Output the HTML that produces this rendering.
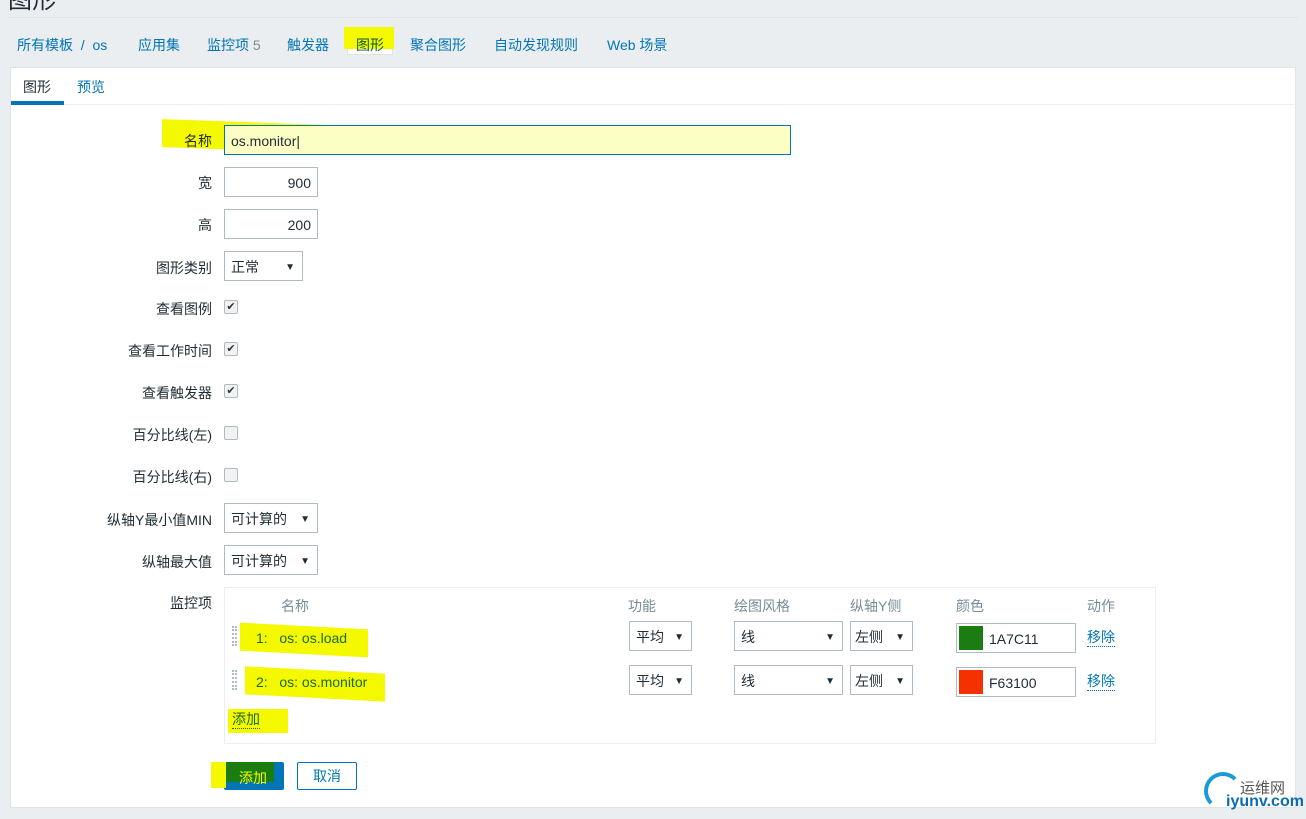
<!DOCTYPE html>
<html><head><meta charset="utf-8"><style>
*{box-sizing:border-box;margin:0;padding:0}
body{width:1306px;height:819px;background:#ebeef0;font-family:"Liberation Sans","Noto Sans CJK SC",sans-serif;font-size:14px;color:#1f2c33;position:relative;overflow:hidden}
.a{position:absolute}
.h1{left:8px;top:-20px;font-size:24px;color:#1f2c33}
.hr{left:8px;top:17px;width:1290px;height:1px;background:#dfe4e7}
.nav{top:35px;left:17px;color:#0275b8;font-size:14px}
.nav span{position:absolute;white-space:nowrap}
.panel{left:10px;top:67px;width:1286px;height:741px;background:#fff;border:1px solid #dfe4e7}
.lbl{right:1094px;text-align:right;white-space:nowrap;font-size:14px}
.inp{border:1px solid #acbbc4;background:#fff;height:30px;font-size:14px;padding:0 6px;line-height:30px}
.sel{border:1px solid #acbbc4;background:#fff;height:30px;line-height:30px;padding-left:6px;font-size:14px}
.sel:after{content:"▼";position:absolute;right:7px;top:1px;font-size:10px}
.cb{width:14px;height:14px;border:1px solid #acbbc4;background:#f2f2f2;border-radius:2px;left:224px;font-size:11px;line-height:12px;text-align:center;color:#333}
.hl{background:#f5f900}
.th{top:596px;color:#768d99;font-size:14px}
</style></head><body>
<div class="a h1">图形</div>
<div class="a hr"></div>
<div class="a nav" style="width:700px;height:20px">
<span style="left:0">所有模板 &nbsp;/&nbsp; os</span>
<span style="left:121px">应用集</span>
<span style="left:190px">监控项 <span style="position:static;color:#768d99">5</span></span>
<span style="left:270px">触发器</span>
</div>
<div class="a" style="left:347px;top:29px;width:46px;height:26px;background:#fff;border:1px solid #dfe4e7"></div>
<div class="a hl" style="left:344px;top:27px;width:50px;height:22px"></div>
<div class="a" style="left:356px;top:35px;color:#0a5a3a">图形</div>
<div class="a" style="left:410px;top:35px;color:#0275b8">聚合图形</div>
<div class="a" style="left:494px;top:35px;color:#0275b8">自动发现规则</div>
<div class="a" style="left:607px;top:35px;color:#0275b8">Web 场景</div>

<div class="a panel"></div>
<div class="a" style="left:11px;top:104px;width:1284px;height:1px;background:#ebeef0"></div>
<div class="a" style="left:23px;top:77px">图形</div>
<div class="a" style="left:77px;top:77px;color:#0275b8">预览</div>
<div class="a" style="left:11px;top:101px;width:53px;height:4px;background:#0275b8"></div>

<div class="a hl" style="left:162px;top:122px;width:164px;height:28px;transform:skewY(2deg)"></div>
<div class="a lbl" style="top:131px">名称</div>
<div class="a inp" style="left:224px;top:125px;width:567px;background:#fbffc4;border-color:#0275b8">os.monitor|</div>
<div class="a lbl" style="top:173px">宽</div>
<div class="a inp" style="left:224px;top:167px;width:94px;text-align:right">900</div>
<div class="a lbl" style="top:215px">高</div>
<div class="a inp" style="left:224px;top:209px;width:94px;text-align:right">200</div>
<div class="a lbl" style="top:258px">图形类别</div>
<div class="a sel" style="left:224px;top:251px;width:79px">正常</div>
<div class="a lbl" style="top:299px">查看图例</div>
<div class="a cb" style="top:300px">✔</div>
<div class="a lbl" style="top:341px">查看工作时间</div>
<div class="a cb" style="top:342px">✔</div>
<div class="a lbl" style="top:383px">查看触发器</div>
<div class="a cb" style="top:384px">✔</div>
<div class="a lbl" style="top:425px">百分比线(左)</div>
<div class="a cb" style="top:426px"></div>
<div class="a lbl" style="top:467px">百分比线(右)</div>
<div class="a cb" style="top:468px"></div>
<div class="a lbl" style="top:510px">纵轴Y最小值MIN</div>
<div class="a sel" style="left:224px;top:503px;width:94px">可计算的</div>
<div class="a lbl" style="top:552px">纵轴最大值</div>
<div class="a sel" style="left:224px;top:545px;width:94px">可计算的</div>
<div class="a lbl" style="top:593px">监控项</div>

<div class="a" style="left:224px;top:587px;width:932px;height:157px;border:1px solid #ebeef0"></div>
<div class="a th" style="left:281px">名称</div>
<div class="a th" style="left:628px">功能</div>
<div class="a th" style="left:734px">绘图风格</div>
<div class="a th" style="left:850px">纵轴Y侧</div>
<div class="a th" style="left:956px">颜色</div>
<div class="a th" style="left:1087px">动作</div>

<div class="a hl" style="left:240px;top:626px;width:128px;height:28px;transform:skewY(3deg)"></div>
<div class="a" style="left:232px;top:626px;width:5px;height:20px;border-left:2px dotted #acbbc4;border-right:2px dotted #acbbc4"></div>
<div class="a" style="left:256px;top:630px;color:#1a6a20">1: &nbsp; os: os.load</div>
<div class="a hl" style="left:245px;top:670px;width:140px;height:28px;transform:skewY(3deg)"></div>
<div class="a" style="left:232px;top:670px;width:5px;height:20px;border-left:2px dotted #acbbc4;border-right:2px dotted #acbbc4"></div>
<div class="a" style="left:256px;top:674px;color:#1a6a20">2: &nbsp; os: os.monitor</div>

<div class="a sel" style="left:629px;top:621px;width:63px">平均</div>
<div class="a sel" style="left:734px;top:621px;width:109px">线</div>
<div class="a sel" style="left:850px;top:621px;width:63px;padding-left:4px">左侧</div>
<div class="a inp" style="left:956px;top:623px;width:120px;padding:0"><div style="position:absolute;left:2px;top:2px;width:24px;height:24px;background:#1a7c11"></div><span style="position:absolute;left:32px;top:0">1A7C11</span></div>
<div class="a" style="left:1087px;top:629px;color:#0275b8;border-bottom:1px dotted #0275b8;line-height:17px">移除</div>

<div class="a sel" style="left:629px;top:665px;width:63px">平均</div>
<div class="a sel" style="left:734px;top:665px;width:109px">线</div>
<div class="a sel" style="left:850px;top:665px;width:63px;padding-left:4px">左侧</div>
<div class="a inp" style="left:956px;top:667px;width:120px;padding:0"><div style="position:absolute;left:2px;top:2px;width:24px;height:24px;background:#f63100"></div><span style="position:absolute;left:32px;top:0">F63100</span></div>
<div class="a" style="left:1087px;top:673px;color:#0275b8;border-bottom:1px dotted #0275b8;line-height:17px">移除</div>

<div class="a hl" style="left:228px;top:709px;width:60px;height:24px"></div>
<div class="a" style="left:232px;top:711px;color:#1a6a20;border-bottom:1px dotted #1a6a20;line-height:17px">添加</div>

<div class="a" style="left:224px;top:762px;width:60px;height:28px;background:#0275b8;border-radius:2px"></div>
<div class="a" style="left:224px;top:762px;width:50px;height:20px;background:#1a7c11"></div>
<div class="a hl" style="left:211px;top:762px;width:15px;height:26px"></div>
<div class="a" style="left:239px;top:768px;color:#f5f900">添加</div>
<div class="a" style="left:297px;top:762px;width:60px;height:28px;border:1px solid #0275b8;border-radius:2px;color:#0275b8;text-align:center;line-height:26px">取消</div>

<div class="a" style="left:1204px;top:772px;width:38px;height:38px;border-radius:50%;border:4px solid #1a9ad6;border-right-color:transparent;border-bottom-color:transparent"></div>
<div class="a" style="left:1240px;top:777px;font-size:15px;color:#555">运维网</div>
<div class="a" style="left:1226px;top:793px;font-size:16px;color:#0a6db3;font-weight:bold">iyunv.com</div>
</body></html>
